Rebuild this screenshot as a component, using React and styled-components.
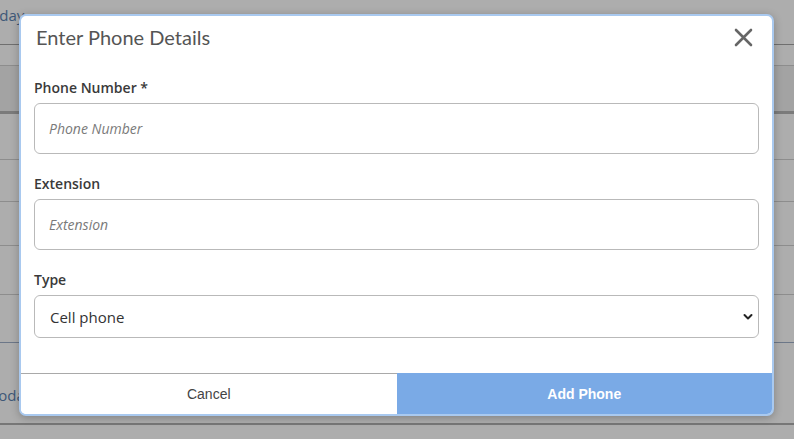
import React from 'react';
import styled, { createGlobalStyle } from 'styled-components';

const GlobalStyle = createGlobalStyle`
  html, body {
    margin: 0;
    padding: 0;
    width: 794px;
    height: 439px;
    overflow: hidden;
    background: #ababab;
    font-family: 'Open Sans', sans-serif;
  }
`;

const Page = styled.div`
  position: relative;
  width: 794px;
  height: 439px;
  overflow: hidden;
  background: #adadad;
`;

const PageRow = styled.div`
  height: ${(p) => p.h}px;
  border-bottom: ${(p) => p.line || 1}px solid ${(p) => p.color || '#8d8d8d'};
  background: ${(p) => p.bg || 'transparent'};
  display: flex;
  align-items: flex-start;
  box-sizing: border-box;
`;

const RowText = styled.span`
  margin-left: ${(p) => p.shift}px;
  margin-top: ${(p) => p.top}px;
  font-family: 'Open Sans', sans-serif;
  font-size: 15px;
  line-height: 20px;
  color: #3e5878;
`;

const Modal = styled.div`
  position: absolute;
  left: 19px;
  top: 14px;
  width: 755px;
  height: 402px;
  box-sizing: border-box;
  border: 2px solid #a9c9ef;
  border-radius: 7px;
  background: #fff;
  box-shadow: 0 2px 8px rgba(0, 0, 0, 0.25);
  display: flex;
  flex-direction: column;
  overflow: hidden;
`;

const Header = styled.div`
  display: flex;
  align-items: center;
  justify-content: space-between;
  padding: 8px 19px 8px 15px;
`;

const Title = styled.h4`
  margin: 0;
  font-family: 'Lato', sans-serif;
  font-weight: 400;
  font-size: 20px;
  line-height: 26px;
  color: #555;
`;

const CloseButton = styled.button`
  border: 0;
  background: none;
  padding: 0;
  width: 20px;
  height: 20px;
  display: flex;
  align-items: center;
  justify-content: center;
  cursor: pointer;
`;

const Body = styled.div`
  flex: 1;
  padding: 20px 13px 0;
  display: flex;
  flex-direction: column;
`;

const Field = styled.div`
  display: flex;
  flex-direction: column;
  gap: 5px;
  margin-bottom: 20px;
`;

const Label = styled.label`
  font-family: 'Open Sans', sans-serif;
  font-weight: 600;
  font-size: 14px;
  line-height: 20px;
  color: #3a3a3a;
`;

const Input = styled.input`
  box-sizing: border-box;
  width: 100%;
  height: 51px;
  border: 1px solid #b9b9b9;
  border-radius: 6px;
  padding: 0 14px;
  font-family: 'Open Sans', sans-serif;
  font-size: 14px;
  color: #333;
  outline: none;
  &::placeholder {
    font-style: italic;
    color: #7a7a7a;
  }
`;

const SelectWrap = styled.div`
  position: relative;
`;

const Select = styled.select`
  box-sizing: border-box;
  width: 100%;
  height: 43px;
  border: 1px solid #b9b9b9;
  border-radius: 6px;
  padding: 0 15px;
  font-family: 'Open Sans', sans-serif;
  font-size: 15px;
  color: #333;
  background: #fff;
  appearance: none;
  outline: none;
`;

const Chevron = styled.svg`
  position: absolute;
  right: 6px;
  top: 18px;
  pointer-events: none;
`;

const Footer = styled.div`
  display: flex;
  height: 41px;
`;

const FooterButton = styled.button`
  flex: 1;
  border: 0;
  border-top: 1px solid ${(p) => (p.primary ? '#7aaae6' : '#a9a9a9')};
  background: ${(p) => (p.primary ? '#7aaae6' : '#fff')};
  color: ${(p) => (p.primary ? '#fff' : '#444')};
  font-family: 'Liberation Sans', Arial, sans-serif;
  font-weight: ${(p) => (p.primary ? 700 : 400)};
  font-size: 14px;
  cursor: pointer;
`;

const rows = [
  { h: 45, color: '#6f6f6f', text: 'Today', shift: -18, top: 5 },
  { h: 21 },
  { h: 48, line: 3, color: '#7b7b7b', bg: '#a3a3a3' },
  { h: 46 },
  { h: 42 },
  { h: 44 },
  { h: 49 },
  { h: 48, color: '#6c7788' },
  { h: 82, line: 2, color: '#777', text: 'Today', shift: -10, top: 42 },
];

const App = () => {
  return (
    <>
      <GlobalStyle />
      <Page>
        {rows.map((r, i) => (
          <PageRow key={i} h={r.h} line={r.line} color={r.color} bg={r.bg}>
            {r.text && (
              <RowText shift={r.shift} top={r.top}>
                {r.text}
              </RowText>
            )}
          </PageRow>
        ))}
        <Modal>
          <Header>
            <Title>Enter Phone Details</Title>
            <CloseButton aria-label="Close">
              <svg width="19" height="19" viewBox="0 0 19 19">
                <path d="M2 2 L17 17 M17 2 L2 17" stroke="#666" strokeWidth="2.6" strokeLinecap="round" />
              </svg>
            </CloseButton>
          </Header>
          <Body>
            <Field>
              <Label>Phone Number *</Label>
              <Input placeholder="Phone Number" />
            </Field>
            <Field>
              <Label>Extension</Label>
              <Input placeholder="Extension" />
            </Field>
            <Field>
              <Label>Type</Label>
              <SelectWrap>
                <Select defaultValue="cell">
                  <option value="cell">Cell phone</option>
                  <option value="home">Home phone</option>
                  <option value="work">Work phone</option>
                </Select>
                <Chevron width="10" height="8" viewBox="0 0 10 8">
                  <path d="M1.5 2 L5 5.5 L8.5 2" fill="none" stroke="#222" strokeWidth="2" strokeLinecap="round" strokeLinejoin="round" />
                </Chevron>
              </SelectWrap>
            </Field>
          </Body>
          <Footer>
            <FooterButton>Cancel</FooterButton>
            <FooterButton primary>Add Phone</FooterButton>
          </Footer>
        </Modal>
      </Page>
    </>
  );
};

export default App;
